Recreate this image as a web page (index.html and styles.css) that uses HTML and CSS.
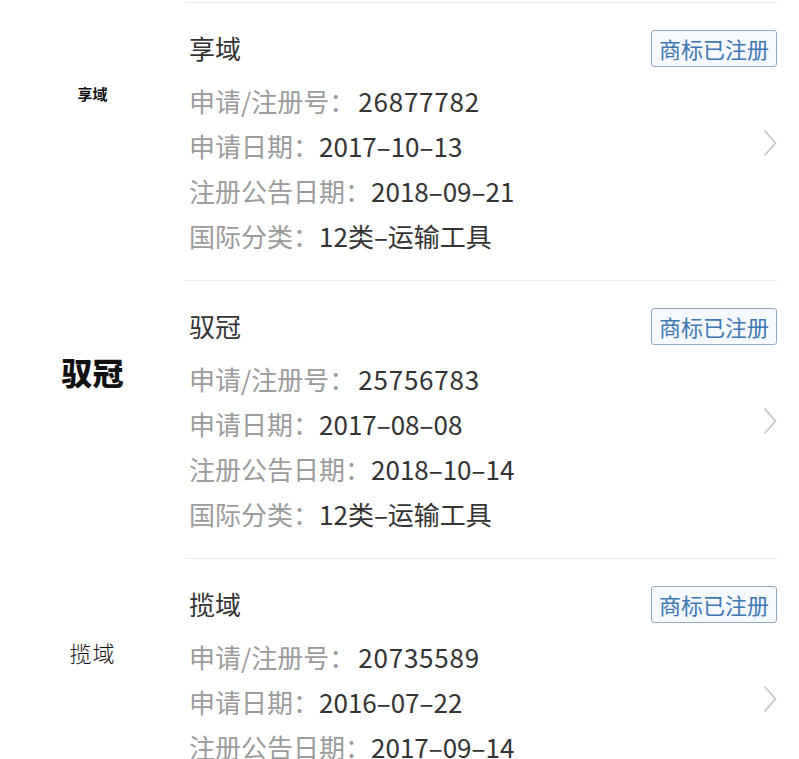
FILE: index.html
```html
<!DOCTYPE html>
<html lang="zh-CN">
<head>
<meta charset="utf-8">
<title>商标列表</title>
<link rel="stylesheet" href="styles.css">
</head>
<body>
<div class="list">
  <div class="row">
    <div class="side"><span class="mark mark-a">享域</span></div>
    <div class="panel">
      <div class="head"><span class="title">享域</span><span class="badge">商标已注册</span></div>
      <div class="line"><span class="k">申请/注册号：</span><span class="v num">26877782</span></div>
      <div class="line"><span class="k">申请日期：</span><span class="v">2017–10–13</span></div>
      <div class="line"><span class="k">注册公告日期：</span><span class="v">2018–09–21</span></div>
      <div class="line"><span class="k">国际分类：</span><span class="v">12类–运输工具</span></div>
      <svg class="chev" viewBox="0 0 14 28" width="14" height="28"><path d="M1.5 1.5 L12.5 14 L1.5 26.5" fill="none" stroke="#c4c4c4" stroke-width="1.6"/></svg>
    </div>
  </div>
  <div class="row">
    <div class="side"><span class="mark mark-b">驭冠</span></div>
    <div class="panel">
      <div class="head"><span class="title">驭冠</span><span class="badge">商标已注册</span></div>
      <div class="line"><span class="k">申请/注册号：</span><span class="v num">25756783</span></div>
      <div class="line"><span class="k">申请日期：</span><span class="v">2017–08–08</span></div>
      <div class="line"><span class="k">注册公告日期：</span><span class="v">2018–10–14</span></div>
      <div class="line"><span class="k">国际分类：</span><span class="v">12类–运输工具</span></div>
      <svg class="chev" viewBox="0 0 14 28" width="14" height="28"><path d="M1.5 1.5 L12.5 14 L1.5 26.5" fill="none" stroke="#c4c4c4" stroke-width="1.6"/></svg>
    </div>
  </div>
  <div class="row">
    <div class="side"><span class="mark mark-c">揽域</span></div>
    <div class="panel">
      <div class="head"><span class="title">揽域</span><span class="badge">商标已注册</span></div>
      <div class="line"><span class="k">申请/注册号：</span><span class="v num">20735589</span></div>
      <div class="line"><span class="k">申请日期：</span><span class="v">2016–07–22</span></div>
      <div class="line"><span class="k">注册公告日期：</span><span class="v">2017–09–14</span></div>
      <svg class="chev" viewBox="0 0 14 28" width="14" height="28"><path d="M1.5 1.5 L12.5 14 L1.5 26.5" fill="none" stroke="#c4c4c4" stroke-width="1.6"/></svg>
    </div>
  </div>
</div>
</body>
</html>
```

FILE: styles.css
```css
html, body {
  margin: 0;
  padding: 0;
  background: #fff;
  overflow: hidden;
  height: 759px;
}
body {
  font-family: "Noto Sans CJK SC", "Noto Sans", sans-serif;
  color: #333;
}
.list {
  padding-top: 2px;
}
.row {
  display: grid;
  grid-template-columns: 185px 592px;
}
.side {
  text-align: center;
  padding-top: 72px;
}
.mark {
  display: block;
  line-height: 40px;
  color: #111;
}
.mark-a {
  font-size: 15px;
  font-weight: 700;
}
.mark-b {
  font-size: 31px;
  font-weight: 900;
}
.mark-c {
  font-size: 22px;
  font-weight: 300;
  letter-spacing: 1px;
  margin-top: 2px;
}
.panel {
  border-top: 1px solid #ebebeb;
  padding: 22px 0 22px 4px;
  display: grid;
  grid-template-columns: 1fr 14px;
  grid-template-rows: 53px repeat(4, 45px);
  font-size: 26px;
  min-height: 233px;
}
.head {
  grid-column: 1 / 3;
  grid-row: 1;
  display: flex;
  justify-content: space-between;
  align-items: flex-start;
  height: 45px;
}
.title {
  color: #333;
  line-height: 45px;
}
.badge {
  font-size: 22px;
  line-height: 33px;
  color: #3d78b3;
  border: 1px solid #92a9c2;
  border-radius: 3px;
  background: #f5f9fd;
  padding: 1px 7px;
  margin-top: 5px;
}
.line {
  grid-column: 1;
  line-height: 45px;
  white-space: nowrap;
}
.k {
  color: #9b9b9b;
}
.v {
  color: #333;
}
.num {
  letter-spacing: 0.8px;
  margin-left: 3px;
}
.chev {
  grid-column: 2;
  grid-row: 1 / 6;
  align-self: center;
  margin-top: 2px;
}
```
